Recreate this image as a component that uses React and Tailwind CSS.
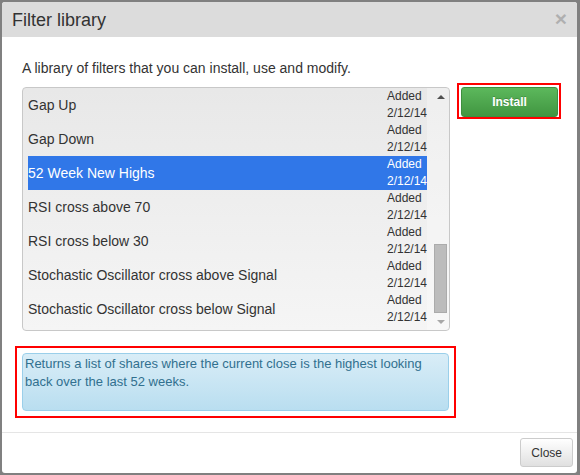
import { useState } from 'react';

const filters = [
  'Gap Up',
  'Gap Down',
  '52 Week New Highs',
  'RSI cross above 70',
  'RSI cross below 30',
  'Stochastic Oscillator cross above Signal',
  'Stochastic Oscillator cross below Signal',
];

const App = () => {
  const [selected, setSelected] = useState(2);

  return (
    <div className="w-[580px] h-[475px] bg-[#808080] pl-[2px] pt-[2px] font-['Liberation_Sans',Arial,sans-serif] text-[#333]">
      <div className="w-[575px] h-[471px] bg-white rounded-[3px] flex flex-col overflow-hidden">
        {/* header */}
        <div className="h-[35px] shrink-0 bg-[#dcdcdc] flex items-center justify-between pl-[10px] pr-[10px]">
          <h4 className="text-[18px] leading-none text-[#333]">Filter library</h4>
          <button className="text-[21px] font-bold leading-none text-black opacity-20 -mt-[2px]">
            ×
          </button>
        </div>

        {/* body */}
        <div className="flex-1 px-[20px] pt-[21px]">
          <p className="text-[14px] leading-[20px] mb-[9px]">
            A library of filters that you can install, use and modify.
          </p>

          <div className="flex items-start gap-[7px]">
            <div className="shrink-0 w-[428px] h-[244px] border border-[#c8c8c8] rounded-[4px] bg-linear-to-b from-[#e8e8e8] to-[#f5f5f5] flex overflow-hidden">
              <div className="pl-[5px] w-[404px]">
                {filters.map((name, i) => (
                  <div
                    key={name}
                    onClick={() => setSelected(i)}
                    className={
                      'h-[34px] flex items-center justify-between cursor-default ' +
                      (i === selected ? 'bg-[#3077e8] text-white' : '')
                    }
                  >
                    <span className="text-[14px]">{name}</span>
                    <div className="text-[12px] leading-[17px]">
                      <div>Added</div>
                      <div>2/12/14</div>
                    </div>
                  </div>
                ))}
              </div>
              {/* scrollbar */}
              <div className="w-[22px] flex flex-col pl-[7px] pr-[2px] bg-white/30">
                <div className="h-[17px] flex items-center justify-center">
                  <div className="w-0 h-0 border-l-[4px] border-r-[4px] border-b-[4px] border-l-transparent border-r-transparent border-b-[#505050]"></div>
                </div>
                <div className="flex-1 flex flex-col justify-end">
                  <div className="h-[69px] bg-[#bcbcbc] border border-[#ababab]"></div>
                </div>
                <div className="h-[17px] flex items-center justify-center">
                  <div className="w-0 h-0 border-l-[4px] border-r-[4px] border-t-[4px] border-l-transparent border-r-transparent border-t-[#a8a8a8]"></div>
                </div>
              </div>
            </div>

            <div className="shrink-0 -mt-[4px] border-2 border-[#ff0000] pt-[2px] pl-[2px] pr-[1px]">
              <button className="block w-[97px] h-[30px] rounded-[3px] border border-[#3e8f3e] bg-linear-to-b from-[#5cb85c] to-[#419641] text-white text-[12px] font-bold [text-shadow:0_-1px_0_rgba(0,0,0,0.2)]">
                Install
              </button>
            </div>
          </div>

          <div className="mt-[15px] -ml-[7px] w-[441px] border-2 border-[#ff0000] p-[5px]">
            <div className="h-[58px] border border-[#9acfea] rounded-[4px] bg-linear-to-b from-[#d9edf7] to-[#b9def0] text-[#31708f] text-[13px] leading-[18px] px-[2px] pt-[1px]">
              Returns a list of shares where the current close is the highest looking back over the last 52 weeks.
            </div>
          </div>
        </div>

        {/* footer */}
        <div className="h-[41px] shrink-0 border-t border-[#e5e5e5] flex justify-end items-start pt-[5px] pr-[4px]">
          <button className="h-[29px] px-[10px] rounded-[3px] border border-[#ccc] bg-linear-to-b from-white to-[#e0e0e0] text-[12px] text-[#333]">
            Close
          </button>
        </div>
      </div>
    </div>
  );
};

export default App;
